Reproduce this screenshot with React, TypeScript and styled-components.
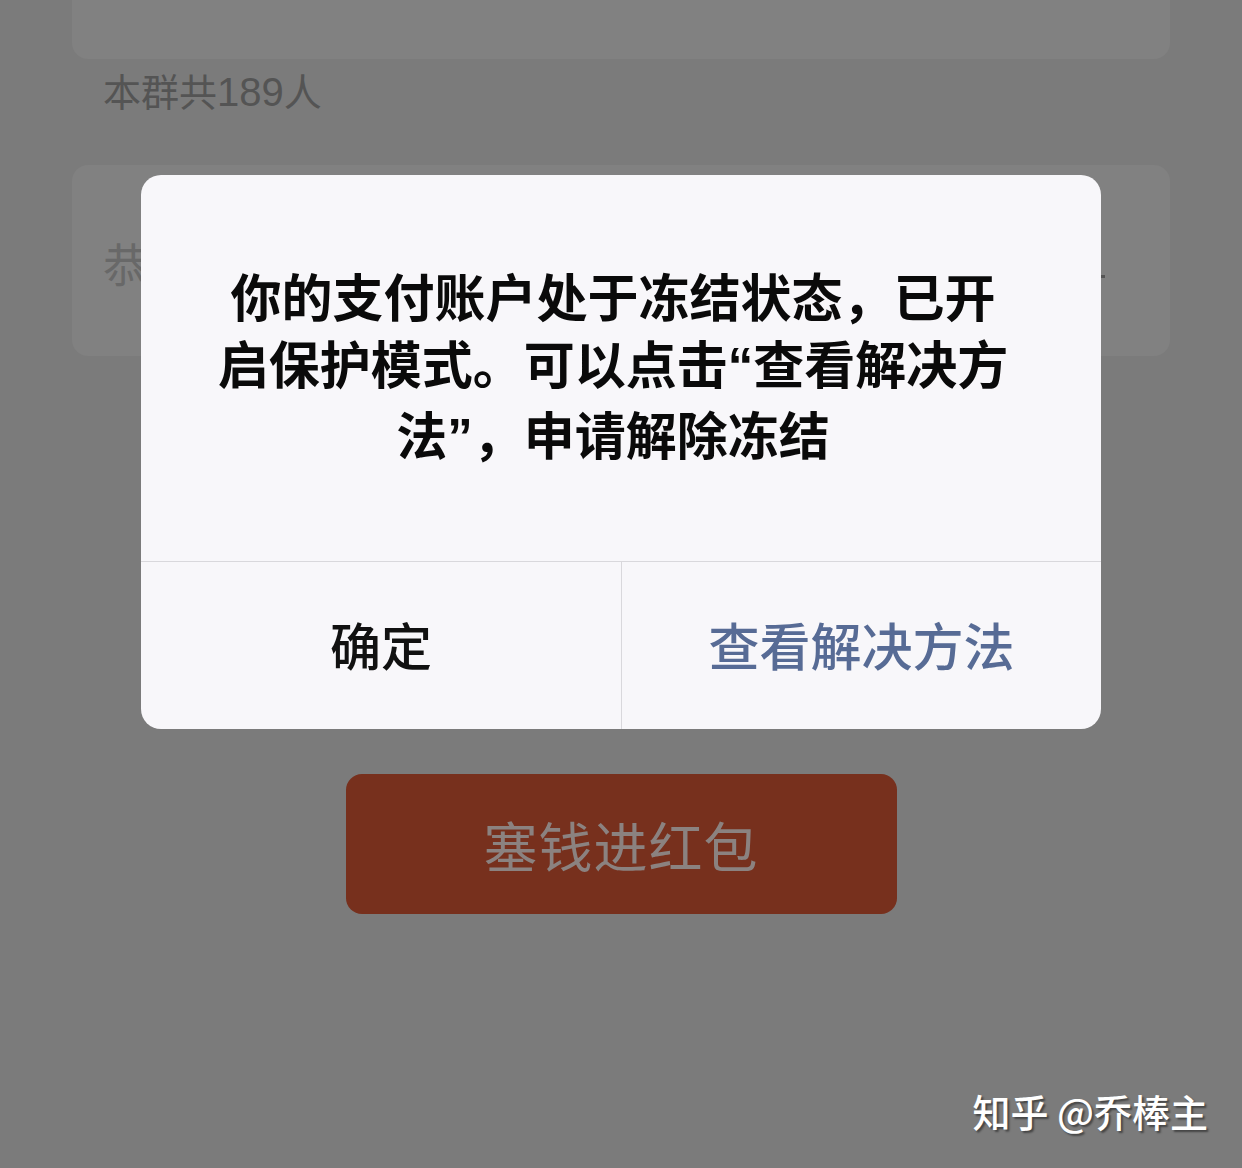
import React from 'react';
import styled, { createGlobalStyle } from 'styled-components';

const GlobalStyle = createGlobalStyle`
  html, body {
    margin: 0;
    padding: 0;
    background: #7b7b7b;
  }
  body {
    font-family: "Noto Sans CJK SC", "Noto Sans", sans-serif;
  }
`;

const Page = styled.div`
  position: relative;
  width: 1242px;
  height: 1168px;
  overflow: hidden;
  background: #7b7b7b;
  padding: 0 72px;
  box-sizing: border-box;
`;

const Card = styled.div<{ $height: number; $open?: boolean }>`
  height: ${(p) => p.$height}px;
  background: #818181;
  border-radius: ${(p) => (p.$open ? '0 0 16px 16px' : '16px')};
  box-sizing: border-box;
  padding: 0 31px;
  display: flex;
  align-items: center;
  justify-content: space-between;
`;

const Caption = styled.div`
  padding: 6px 31px 0;
  height: 106px;
  box-sizing: border-box;
  font-size: 38px;
  line-height: 50px;
  color: #545454;
`;

const Digits = styled.span`
  font-family: "Liberation Sans", "Noto Sans", sans-serif;
  font-size: 40px;
`;

// hint text runs on under the dialog, only the first glyph peeks out
const Placeholder = styled.span`
  font-size: 46px;
  color: #686868;
  margin-top: 2px;
  white-space: nowrap;
`;

const Dot = styled.span`
  width: 6px;
  height: 3px;
  background: #555;
  margin-right: 34px;
  margin-top: 32px;
`;

const RedButton = styled.div`
  width: 551px;
  height: 140px;
  margin: 418px auto 0;
  background: #77301d;
  border-radius: 16px;
  display: flex;
  align-items: center;
  justify-content: center;
  font-size: 54px;
  color: #8b8280;
  letter-spacing: 1px;
`;

const Dialog = styled.div`
  position: absolute;
  left: 141px;
  top: 175px;
  width: 960px;
  background: #f8f7fa;
  border-radius: 20px;
  overflow: hidden;
`;

const Message = styled.div`
  height: 387px;
  box-sizing: border-box;
  border-bottom: 1px solid #d9d8dc;
  display: flex;
  align-items: center;
  justify-content: center;
  text-align: center;
  font-size: 51px;
  line-height: 67px;
  font-weight: 700;
  color: #0a0a0a;
  padding: 0 16px 4px 0;
`;

const Quote = styled.span`
  font-family: "Liberation Sans", sans-serif;
  font-weight: 700;
`;

const Actions = styled.div`
  display: grid;
  grid-template-columns: 480px 1fr;
  height: 167px;
`;

const Action = styled.div<{ $primary?: boolean }>`
  display: flex;
  align-items: center;
  justify-content: center;
  font-size: 51px;
  font-weight: 500;
  color: ${(p) => (p.$primary ? '#576b95' : '#111')};
  padding-bottom: 3px;
  & + & {
    border-left: 1px solid #d9d8dc;
  }
`;

const Watermark = styled.div`
  position: absolute;
  right: 34px;
  bottom: 30px;
  font-size: 38px;
  font-weight: 500;
  color: #fff;
  text-shadow: 2px 2px 2px rgba(0, 0, 0, 0.45);
`;

export default function App() {
  return (
    <>
      <GlobalStyle />
      <Page>
        <Card $height={59} $open />
        <Caption>
          本群共<Digits>189</Digits>人
        </Caption>
        <Card $height={191}>
          <Placeholder>恭喜发财，大吉大利</Placeholder>
          <Dot />
        </Card>
        <RedButton>塞钱进红包</RedButton>
        <Dialog>
          <Message>
            <div>
              你的支付账户处于冻结状态，已开
              <br />
              启保护模式。可以点击<Quote>“</Quote>查看解决方
              <br />
              法<Quote>”</Quote>，申请解除冻结
            </div>
          </Message>
          <Actions>
            <Action>确定</Action>
            <Action $primary>查看解决方法</Action>
          </Actions>
        </Dialog>
        <Watermark>知乎 @乔棒主</Watermark>
      </Page>
    </>
  );
}
